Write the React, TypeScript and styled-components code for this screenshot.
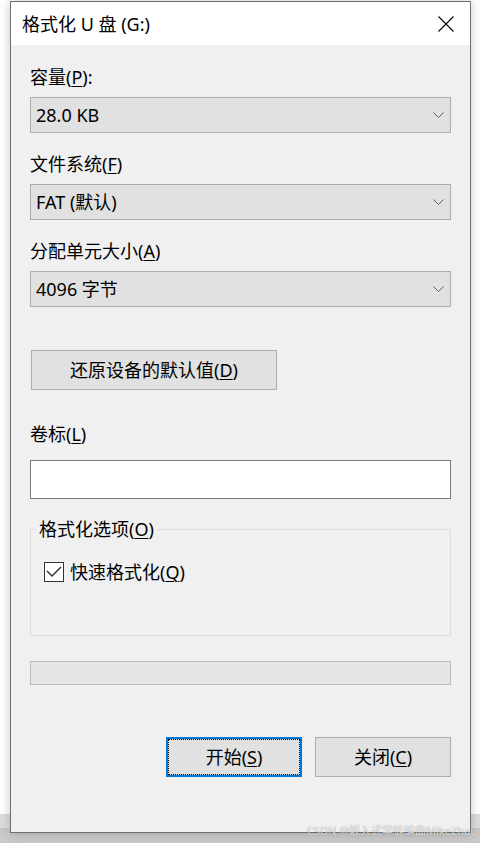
import styled, { createGlobalStyle } from 'styled-components'

const GlobalStyle = createGlobalStyle`
  html, body {
    margin: 0;
    padding: 0;
  }
  body {
    background: linear-gradient(
      to bottom,
      #ffffff 0,
      #ffffff 814px,
      #dcdcdc 814px,
      #dcdcdc 828px,
      #c9c9c9 828px
    );
    min-height: 843px;
    font-family: "Noto Sans", "Noto Sans CJK SC", sans-serif;
    font-size: 18px;
    color: #000;
  }
  * {
    box-sizing: border-box;
  }
`

const Chevron = () => (
  <svg width="11" height="6" viewBox="0 0 11 6">
    <polyline points="0.5,0.5 5.5,5.5 10.5,0.5" fill="none" stroke="#5f5f5f" strokeWidth="1" />
  </svg>
)

const CloseIcon = () => (
  <svg width="16" height="16" viewBox="0 0 16 16">
    <path d="M0.5 0.5 L15.5 15.5 M15.5 0.5 L0.5 15.5" stroke="#000" strokeWidth="1.1" fill="none" />
  </svg>
)

const CheckIcon = () => (
  <svg width="20" height="20" viewBox="0 0 20 20">
    <rect x="0.5" y="0.5" width="19" height="19" fill="#fff" stroke="#333" strokeWidth="1" />
    <polyline points="3,9 8,14 17,5" fill="none" stroke="#333" strokeWidth="1.5" />
  </svg>
)

export default function App() {
  const fields = [
    { label: '容量', key: 'P', suffix: ':', value: '28.0 KB' },
    { label: '文件系统', key: 'F', suffix: '', value: 'FAT (默认)' },
    { label: '分配单元大小', key: 'A', suffix: '', value: '4096 字节' },
  ]

  return (
    <>
      <GlobalStyle />
      <Page>
        <Window>
          <TitleBar>
            <Title>格式化 U 盘 (G:)</Title>
            <CloseButton>
              <CloseIcon />
            </CloseButton>
          </TitleBar>
          <Body>
            {fields.map((f) => (
              <Field key={f.key}>
                <Label>
                  {f.label}(<Key>{f.key}</Key>){f.suffix}
                </Label>
                <Combo>
                  <span>{f.value}</span>
                  <Chevron />
                </Combo>
              </Field>
            ))}

            <RestoreButton>
              还原设备的默认值(<Key>D</Key>)
            </RestoreButton>

            <VolumeLabel>
              卷标(<Key>L</Key>)
            </VolumeLabel>
            <TextInput />

            <Group>
              <Legend>
                格式化选项(<Key>O</Key>)
              </Legend>
              <CheckRow>
                <CheckIcon />
                <span>
                  快速格式化(<Key>Q</Key>)
                </span>
              </CheckRow>
            </Group>

            <Progress />

            <Actions>
              <DialogButton $focused>
                开始(<Key>S</Key>)
              </DialogButton>
              <DialogButton>
                关闭(<Key>C</Key>)
              </DialogButton>
            </Actions>
          </Body>
        </Window>
        <Watermark>CSDN @嵌入式学徒编曲MikeZhau</Watermark>
      </Page>
    </>
  )
}

const Page = styled.div`
  position: relative;
  height: 843px;
  padding: 1px 0 0 10px;
`

const Window = styled.div`
  width: 461px;
  height: 832px;
  border: 1px solid #6f6f6f;
  background: #f0f0f0;
  display: flex;
  flex-direction: column;
  box-shadow: 0 0 10px rgba(0, 0, 0, 0.22);
`

const TitleBar = styled.div`
  height: 43px;
  background: #fff;
  display: flex;
  align-items: center;
  justify-content: space-between;
  padding-left: 11px;
`

const Title = styled.div`
  line-height: 24px;
  margin-top: 1px;
`

const CloseButton = styled.div`
  width: 48px;
  height: 43px;
  display: flex;
  align-items: center;
  justify-content: center;
`

const Body = styled.div`
  flex: 1;
  padding: 20px 19px 0 19px;
  display: flex;
  flex-direction: column;
`

const Field = styled.div`
  display: flex;
  flex-direction: column;
  gap: 8px;
  margin-bottom: 19px;
`

const Label = styled.div`
  line-height: 24px;
`

const Key = styled.u`
  text-decoration: underline;
  text-decoration-thickness: 1px;
  text-underline-offset: 2px;
`

const Combo = styled.div`
  height: 36px;
  border: 1px solid #adadad;
  background: #e1e1e1;
  display: flex;
  align-items: center;
  justify-content: space-between;
  padding: 0 6px 0 5px;
  line-height: 24px;
`

const RestoreButton = styled.div`
  width: 246px;
  height: 40px;
  margin: 24px 0 0 1px;
  border: 1px solid #adadad;
  background: #e1e1e1;
  display: flex;
  align-items: center;
  justify-content: center;
  line-height: 24px;
`

const VolumeLabel = styled.div`
  line-height: 24px;
  margin-top: 32px;
`

const TextInput = styled.div`
  height: 39px;
  margin-top: 14px;
  border: 1px solid #7a7a7a;
  background: #fff;
`

const Group = styled.fieldset`
  margin: 18px 0 0;
  padding: 0;
  height: 119px;
  border: 1px solid #dcdcdc;
  min-width: 0;
`

const Legend = styled.legend`
  margin-left: 5px;
  padding: 0 3px;
  line-height: 24px;
`

const CheckRow = styled.div`
  display: flex;
  align-items: center;
  gap: 6px;
  margin: 19px 0 0 13px;
  line-height: 24px;
`

const Progress = styled.div`
  height: 24px;
  margin-top: 25px;
  border: 1px solid #bcbcbc;
  background: #e6e6e6;
`

const Actions = styled.div`
  display: flex;
  justify-content: flex-end;
  gap: 13px;
  margin-top: 52px;
`

const DialogButton = styled.div<{ $focused?: boolean }>`
  width: 136px;
  height: 40px;
  display: flex;
  align-items: center;
  justify-content: center;
  background: #e1e1e1;
  line-height: 24px;
  border: ${(p) => (p.$focused ? '2px solid #0078d7' : '1px solid #adadad')};
  outline: ${(p) => (p.$focused ? '1px dotted #000' : 'none')};
  outline-offset: -3px;
`

const Watermark = styled.div`
  position: absolute;
  right: 3px;
  bottom: 5px;
  font-size: 11px;
  line-height: 14px;
  color: rgba(255, 255, 255, 0.75);
  text-shadow: 0 0 1px rgba(0, 0, 0, 0.45);
`
